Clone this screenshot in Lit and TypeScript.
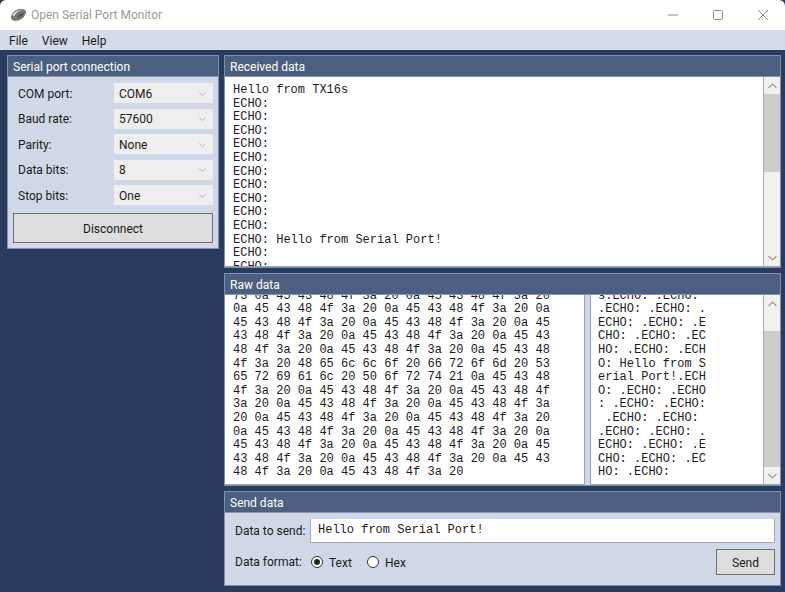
import { LitElement, html, css } from "lit";
import { customElement } from "lit/decorators.js";

const received = [
  "Hello from TX16s", "ECHO:", "ECHO:", "ECHO:", "ECHO:", "ECHO:", "ECHO:", "ECHO:", "ECHO:", "ECHO:", "ECHO:",
  "ECHO: Hello from Serial Port!", "ECHO:", "ECHO:",
];
const hex = [
  "73 0a 45 43 48 4f 3a 20 0a 45 43 48 4f 3a 20",
  "0a 45 43 48 4f 3a 20 0a 45 43 48 4f 3a 20 0a",
  "45 43 48 4f 3a 20 0a 45 43 48 4f 3a 20 0a 45",
  "43 48 4f 3a 20 0a 45 43 48 4f 3a 20 0a 45 43",
  "48 4f 3a 20 0a 45 43 48 4f 3a 20 0a 45 43 48",
  "4f 3a 20 48 65 6c 6c 6f 20 66 72 6f 6d 20 53",
  "65 72 69 61 6c 20 50 6f 72 74 21 0a 45 43 48",
  "4f 3a 20 0a 45 43 48 4f 3a 20 0a 45 43 48 4f",
  "3a 20 0a 45 43 48 4f 3a 20 0a 45 43 48 4f 3a",
  "20 0a 45 43 48 4f 3a 20 0a 45 43 48 4f 3a 20",
  "0a 45 43 48 4f 3a 20 0a 45 43 48 4f 3a 20 0a",
  "45 43 48 4f 3a 20 0a 45 43 48 4f 3a 20 0a 45",
  "43 48 4f 3a 20 0a 45 43 48 4f 3a 20 0a 45 43",
  "48 4f 3a 20 0a 45 43 48 4f 3a 20",
];
const ascii = [
  "s.ECHO: .ECHO:", ".ECHO: .ECHO: .", "ECHO: .ECHO: .E", "CHO: .ECHO: .EC", "HO: .ECHO: .ECH",
  "O: Hello from S", "erial Port!.ECH", "O: .ECHO: .ECHO", ": .ECHO: .ECHO:", " .ECHO: .ECHO:",
  ".ECHO: .ECHO: .", "ECHO: .ECHO: .E", "CHO: .ECHO: .EC", "HO: .ECHO:",
];
const fields = [
  ["COM port:", "COM6"], ["Baud rate:", "57600"], ["Parity:", "None"], ["Data bits:", "8"], ["Stop bits:", "One"],
];

const chevron = (up: boolean) => html`<svg class="chev" width="9" height="6" viewBox="0 0 9 6"><path d=${up ? "M.5 5 4.500 1l4 4" : "M.5 1l4 4 4-4"} fill="none" stroke="#9a9a9a" stroke-width="1.200"/></svg>`;

@customElement("app-root")
export class AppRoot extends LitElement {
  static styles = css`
    :host { display: flex; flex-direction: column; width: 785px; height: 592px; overflow: hidden; background: #2a3b5e; font-family: Roboto, "Open Sans", sans-serif; font-size: 12px; color: #1a1a1a; }
    * { box-sizing: border-box; }
    .title { height: 30px; flex: none; background: #fff; display: flex; align-items: center; color: #9a9a9a; border-radius: 6px 6px 0 0; }
    .logo { margin-left: 10px; margin-right: 4px; margin-top: -1px; }
    .title span { flex: 1; padding-bottom: 1px; }
    .wb { width: 45px; height: 30px; display: flex; align-items: center; justify-content: center; }
    .menu { height: 20px; flex: none; background: #d5dbe8; display: flex; gap: 14px; padding: 1px 0 0 9px; align-items: center; }
    .body { flex: 1; display: grid; grid-template-columns: 212px 557px; gap: 5px; padding: 5px 4px 6px 7px; min-height: 0; }
    .panel { border: 1px solid #7f8fb0; background: #d0d8e8; display: flex; flex-direction: column; min-height: 0; overflow: hidden; }
    .head { height: 21px; flex: none; background: #4d5f80; color: #fff; padding: 1px 0 0 5px; display: flex; align-items: center; border-bottom: 1px solid #8794ad; }
    .left { align-self: start; height: 194px; }
    .form { display: flex; flex-direction: column; gap: 5.5px; padding: 6px 5px 0 10px; }
    .row { display: flex; align-items: center; height: 20px; }
    .row label { width: 96px; flex: none; padding-top: 1px; }
    .combo { flex: 1; height: 20px; background: #eeeeee; display: flex; align-items: center; justify-content: space-between; padding: 1px 6px 0 5px; }
    .combo svg { transform: scale(.8); opacity: .7; }
    .btn { background: #dddddd; border: 1px solid #6f6f6f; display: flex; align-items: center; justify-content: center; padding-top: 1px; }
    .disc { height: 30px; margin: 8px 5px 0 5px; }
    .right { display: flex; flex-direction: column; gap: 5px; min-height: 0; }
    .recv, .raw { height: 213px; flex: none; }
    .send { flex: 1; }
    .text { flex: 1; display: flex; background: #fff; min-height: 0; border-bottom: 1px solid #9aa3b5; }
    .mono { font-family: "Liberation Mono", "Courier New", monospace; font-size: 12px; line-height: 13.6px; white-space: pre; }
    .content { flex: 1; padding: 7px 0 0 8px; overflow: hidden; min-width: 0; }
    .content div { height: 13.6px; }
    .bar { width: 17px; flex: none; background: #f0f0f0; display: flex; flex-direction: column; border-left: 1px solid #aaaeb8; }
    .bar .arr { height: 17px; flex: none; display: flex; align-items: center; justify-content: center; }
    .bar .gap { flex: none; }
    .bar .thumb { background: #cdcdcd; flex: none; }
    .bar .rest { flex: 1; }
    .rawbody { flex: 1; display: flex; min-height: 0; }
    .rawbody .pane { display: flex; background: #fff; border-bottom: 1px solid #9aa3b5; }
    .hexpane { width: 360px; flex: none; }
    .ascpane { flex: 1; margin-left: 5px; }
    .bottom { flex: 1; display: flex; flex-direction: column; justify-content: flex-end; padding: 0 0 4px 8px; overflow: hidden; min-width: 0; }
    .bottom div { height: 13.6px; flex: none; }
    .hexpane .bottom { border-right: 1px solid #9aa3b5; }
    .ascpane .bottom { border-left: 1px solid #9aa3b5; padding-left: 7px; }
    .sendbody { flex: 1; padding: 5px 5px 0 10px; display: flex; flex-direction: column; }
    .sendrow { display: flex; align-items: center; height: 25px; }
    .sendrow label { width: 75px; flex: none; }
    .input { flex: 1; height: 25px; background: #fff; border: 1px solid #a4a9b5; border-top-color: #d0d8e8; display: flex; align-items: center; padding-left: 7px; }
    .fmt { display: flex; align-items: center; height: 26px; margin-top: 6px; }
    .fmt label { width: 76px; flex: none; }
    .radio { width: 12px; height: 12px; border-radius: 50%; border: 1px solid #333; background: #fff; display: flex; align-items: center; justify-content: center; margin-right: 6px; flex: none; }
    .radio.on::after { content: ""; width: 6px; height: 6px; border-radius: 50%; background: #222; }
    .opt { width: 38px; }
    .fmt span { padding-top: 2px; }
    .sendbtn { width: 59px; height: 26px; margin-left: auto; }
  `;

  render() {
    return html`
      <div class="title">
        <svg class="logo" width="17" height="14" viewBox="0 0 17 14"><path d="M1 9.500C1 5.500 5 1.500 10 1c3.500-.4 6 .8 6 3 0 3.500-4 8-9 8.800C3.500 13.400 1 12 1 9.500Z" fill="#777"/><path d="M2.500 7c2-3.500 5.500-5 9-5C8.500 3 5.500 5 4 8.500Z" fill="#e2e2e2"/><path d="M7 8.500c2-2 4.500-3.500 7.500-4-1.500 3-4 5-7 5.500Z" fill="#555"/></svg>
        <span>Open Serial Port Monitor</span>
        <div class="wb"><svg width="10" height="2" viewBox="0 0 10 2"><path d="M0 1h10" stroke="#8a8a8a"/></svg></div>
        <div class="wb"><svg width="10" height="10" viewBox="0 0 10 10"><rect x=".5" y=".5" width="9" height="9" rx="1" fill="none" stroke="#8a8a8a"/></svg></div>
        <div class="wb"><svg width="10" height="10" viewBox="0 0 10 10"><path d="M0 0l10 10M10 0 0 10" stroke="#8a8a8a"/></svg></div>
      </div>
      <div class="menu"><span>File</span><span>View</span><span>Help</span></div>
      <div class="body">
        <section class="panel left">
          <div class="head">Serial port connection</div>
          <div class="form">
            ${fields.map(([l, v]) => html`<div class="row"><label>${l}</label><div class="combo"><span>${v}</span>${chevron(false)}</div></div>`)}
          </div>
          <div class="btn disc">Disconnect</div>
        </section>
        <div class="right">
          <section class="panel recv">
            <div class="head">Received data</div>
            <div class="text">
              <div class="content mono">${received.map((l) => html`<div>${l}</div>`)}</div>
              ${this.bar(0, 78)}
            </div>
          </section>
          <section class="panel raw">
            <div class="head">Raw data</div>
            <div class="rawbody">
              <div class="pane hexpane"><div class="bottom mono">${hex.map((l) => html`<div>${l}</div>`)}</div></div>
              <div class="pane ascpane"><div class="bottom mono">${ascii.map((l) => html`<div>${l}</div>`)}</div>${this.bar(19, 136)}</div>
            </div>
          </section>
          <section class="panel send">
            <div class="head">Send data</div>
            <div class="sendbody">
              <div class="sendrow"><label>Data to send:</label><div class="input mono">Hello from Serial Port!</div></div>
              <div class="fmt">
                <label>Data format:</label>
                <div class="radio on"></div><span class="opt">Text</span>
                <div class="radio"></div><span>Hex</span>
                <div class="btn sendbtn">Send</div>
              </div>
            </div>
          </section>
        </div>
      </div>
    `;
  }

  bar(gap: number, thumb: number) {
    return html`<div class="bar">
      <div class="arr">${chevron(true)}</div>
      <div class="gap" style="height:${gap}px"></div>
      <div class="thumb" style="height:${thumb}px"></div>
      <div class="rest"></div>
      <div class="arr">${chevron(false)}</div>
    </div>`;
  }
}
